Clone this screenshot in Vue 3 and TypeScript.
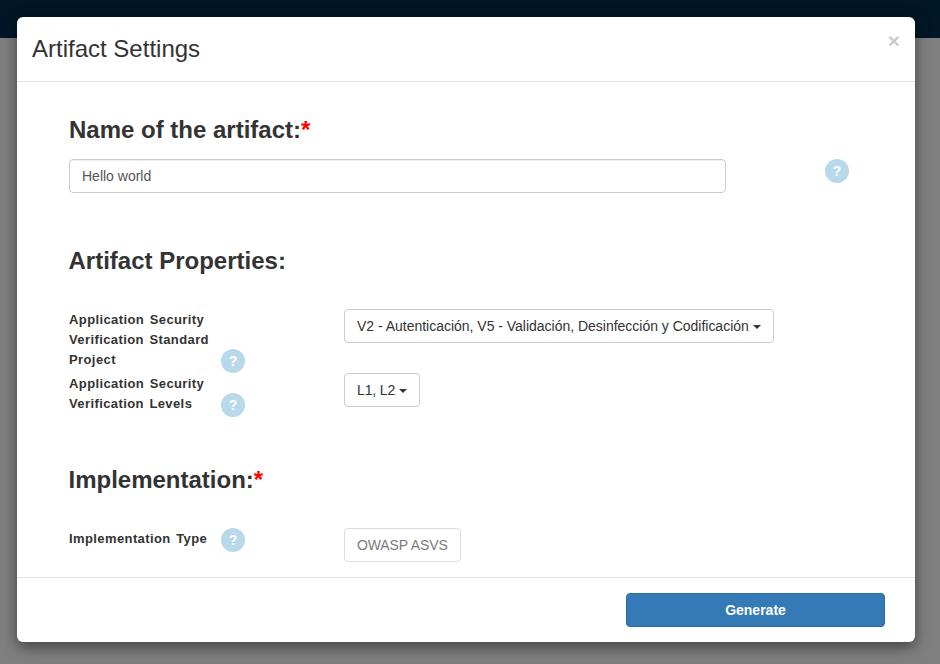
<script setup lang="ts">
interface Row { label: string[]; value: string; height: number; cell: number; tight: boolean }
const props: Row[] = [
  { label: ['Application Security', 'Verification Standard', 'Project'], value: 'V2 - Autenticación, V5 - Validación, Desinfección y Codificación', height: 64, cell: 64, tight: false },
  { label: ['Application Security', 'Verification Levels'], value: 'L1, L2', height: 92, cell: 44, tight: true },
]
</script>

<template>
  <div class="page">
    <div class="topbar"></div>
    <div class="backdrop"></div>
    <div class="modal">
      <header class="modal-header">
        <h4 class="title">Artifact Settings</h4>
        <span class="close">×</span>
      </header>
      <main class="modal-body">
        <h3 class="heading first">Name of the artifact:<span class="req">*</span></h3>
        <div class="name-row">
          <input class="name-input" value="Hello world" />
          <span class="help">?</span>
        </div>

        <h3 class="heading second">Artifact Properties:</h3>
        <div v-for="row in props" :key="row.value" class="prop-row" :style="{ height: row.height + 'px' }">
          <div class="label-cell" :style="{ height: row.cell + 'px' }">
            <div class="label"><div v-for="l in row.label" :key="l">{{ l }}</div></div>
            <span class="help end">?</span>
          </div>
          <button class="drop" :class="{ tight: row.tight }">{{ row.value }}<span class="caret"></span></button>
        </div>

        <h3 class="heading third">Implementation:<span class="req">*</span></h3>
        <div class="prop-row">
          <div class="label-cell">
            <div class="label">Implementation Type</div>
            <span class="help">?</span>
          </div>
          <button class="drop disabled tight">OWASP ASVS</button>
        </div>
      </main>
      <footer class="modal-footer">
        <button class="generate">Generate</button>
      </footer>
    </div>
  </div>
</template>

<style>
html, body { margin: 0; padding: 0; }
</style>

<style scoped>
.page {
  width: 940px;
  height: 664px;
  position: relative;
  overflow: hidden;
  font-family: "Liberation Sans", Arial, sans-serif;
  color: #333;
  background: #fff;
}
.topbar { height: 38px; background: #001727; }
.backdrop { height: 626px; background: #808080; }
.modal {
  position: absolute;
  left: 17px;
  top: 17px;
  width: 898px;
  height: 625px;
  background: #fff;
  border-radius: 6px;
  box-shadow: 0 5px 15px rgba(0, 0, 0, 0.5);
  display: flex;
  flex-direction: column;
  overflow: hidden;
}
.modal-header {
  height: 64px;
  flex: none;
  border-bottom: 1px solid #e5e5e5;
  padding: 0 15px;
  display: flex;
  justify-content: space-between;
  align-items: flex-start;
}
.title {
  margin: 17px 0 0;
  font-size: 24px;
  line-height: 30px;
  font-weight: 400;
}
.close {
  margin-top: 13px;
  font-size: 21px;
  line-height: 21px;
  font-weight: 700;
  color: #000;
  opacity: 0.2;
}
.modal-body {
  flex: 1;
  min-height: 0;
  overflow: hidden;
  padding: 33px 0 0 52px;
}
.heading {
  margin: 0;
  font-size: 24px;
  line-height: 30px;
  font-weight: 700;
}
.req { color: #f00; }
.first { margin-bottom: 14px; }
.second { margin: 53px 0 33px -0.5px; }
.third { margin: 0 0 33px -0.5px; }
.name-row { display: flex; align-items: flex-start; gap: 99px; }
.name-input {
  box-sizing: border-box;
  width: 657px;
  height: 34px;
  padding: 6px 12px;
  border: 1px solid #ccc;
  border-radius: 4px;
  box-shadow: inset 0 1px 1px rgba(0, 0, 0, 0.075);
  font: 14px/20px "Liberation Sans", Arial, sans-serif;
  color: #555;
  outline: none;
}
.help {
  flex: none;
  width: 24px;
  height: 24px;
  border-radius: 50%;
  background: #b8d9ea;
  color: #fff;
  font-size: 14px;
  font-weight: 700;
  line-height: 24px;
  text-align: center;
}
.help.end { margin-top: auto; }
.prop-row { display: flex; align-items: flex-start; gap: 99px; }
.label-cell { display: flex; align-items: flex-start; width: 176px; flex: none; }
.label {
  width: 152px;
  flex: none;
  font-size: 13px;
  line-height: 20px;
  font-weight: 700;
  letter-spacing: 0.4px;
  word-spacing: 1.5px;
  white-space: nowrap;
  position: relative;
  top: 1px;
}
.drop {
  box-sizing: border-box;
  height: 34px;
  padding: 6px 12px;
  background: #fff;
  border: 1px solid #ccc;
  border-radius: 4px;
  font: 14px/20px "Liberation Sans", Arial, sans-serif;
  letter-spacing: -0.015px;
  color: #333;
  white-space: nowrap;
}
.drop.tight { letter-spacing: -0.12px; }
.drop.disabled { opacity: 0.65; }
.caret {
  display: inline-block;
  width: 0;
  height: 0;
  margin-left: 4px;
  vertical-align: middle;
  border-top: 4px solid #333;
  border-right: 4px solid transparent;
  border-left: 4px solid transparent;
}
.modal-footer {
  height: 65px;
  flex: none;
  box-sizing: border-box;
  border-top: 1px solid #e5e5e5;
  padding: 15px 30px 0 0;
  display: flex;
  justify-content: flex-end;
  align-items: flex-start;
}
.generate {
  width: 259px;
  height: 34px;
  background: #337ab7;
  border: 1px solid #2e6da4;
  border-radius: 4px;
  color: #fff;
  font: 700 14px/20px "Liberation Sans", Arial, sans-serif;
}
</style>
